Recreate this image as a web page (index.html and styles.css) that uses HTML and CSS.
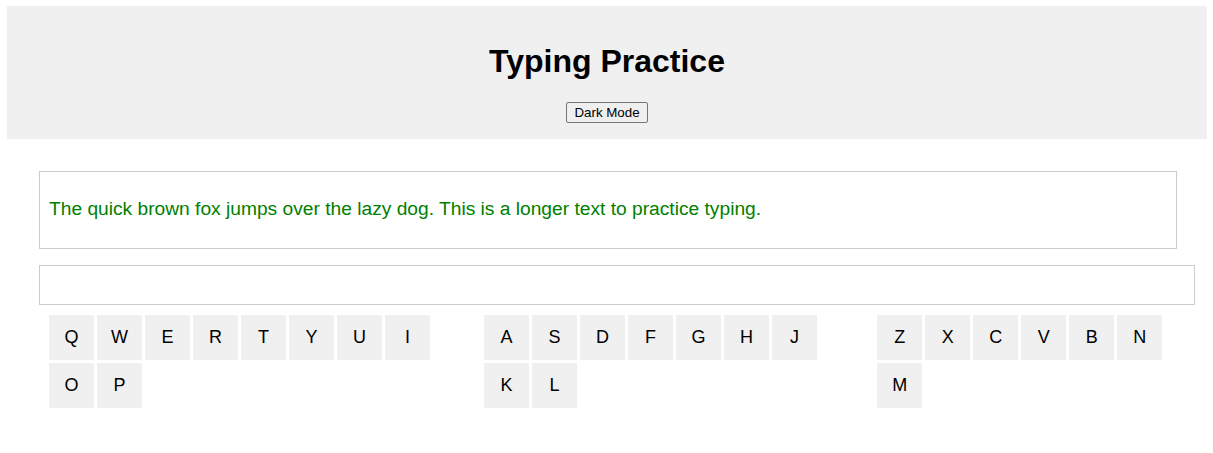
FILE: index.html
```html
<!DOCTYPE html>
<html lang="en">
<head>
<meta charset="utf-8">
<title>Typing Practice</title>
<link rel="stylesheet" href="styles.css">
</head>
<body>
<header class="header">
  <h1 class="title">Typing Practice</h1>
  <button class="mode-btn" type="button">Dark Mode</button>
</header>
<main class="main">
  <div class="text-box">
    <p class="sample">The quick brown fox jumps over the lazy dog. This is a longer text to practice typing.</p>
  </div>
  <input class="typing-input" type="text">
  <div class="keyboard">
    <div class="key-row">
      <div class="key">Q</div><div class="key">W</div><div class="key">E</div><div class="key">R</div><div class="key">T</div><div class="key">Y</div><div class="key">U</div><div class="key">I</div><div class="key">O</div><div class="key">P</div>
    </div>
    <div class="key-row">
      <div class="key">A</div><div class="key">S</div><div class="key">D</div><div class="key">F</div><div class="key">G</div><div class="key">H</div><div class="key">J</div><div class="key">K</div><div class="key">L</div>
    </div>
    <div class="key-row">
      <div class="key">Z</div><div class="key">X</div><div class="key">C</div><div class="key">V</div><div class="key">B</div><div class="key">N</div><div class="key">M</div>
    </div>
  </div>
</main>
</body>
</html>
```
FILE: styles.css
```css
html, body {
  background: #ffffff;
}
body {
  margin: 6px 6px 0 7px;
  font-family: "Liberation Sans", Arial, sans-serif;
  color: #000;
}
.header {
  background: #f0f0f0;
  text-align: center;
  padding: 16px 0 16px;
}
.title {
  font-size: 32px;
  font-weight: bold;
  margin: 21px 0 22px;
}
.mode-btn {
  font-family: "Liberation Sans", Arial, sans-serif;
  font-size: 13.333px;
  color: #000;
  background: #efefef;
  border: 1px solid #767676;
  border-radius: 2px;
  padding: 2px 7px;
}
.main {
  padding: 32px 30px 0 32px;
}
.text-box {
  border: 1px solid #cccccc;
  padding: 0 9px;
  margin-bottom: 16px;
}
.sample {
  color: #008000;
  font-size: 19.2px;
  margin: 0;
  padding: 26px 0 28px;
}
.typing-input {
  display: block;
  box-sizing: border-box;
  width: 1156px;
  height: 40px;
  border: 1px solid #cccccc;
  padding: 10px;
  font-size: 16px;
  font-family: "Liberation Sans", Arial, sans-serif;
  margin: 0;
}
.keyboard {
  display: flex;
  width: 1138px;
}
.key-row {
  display: flex;
  flex-wrap: wrap;
  align-content: flex-start;
  gap: 3px;
  padding: 10px;
  min-width: 0;
}
.key {
  width: 45px;
  height: 45px;
  background: #f0f0f0;
  display: flex;
  align-items: center;
  justify-content: center;
  font-size: 18px;
}
```
